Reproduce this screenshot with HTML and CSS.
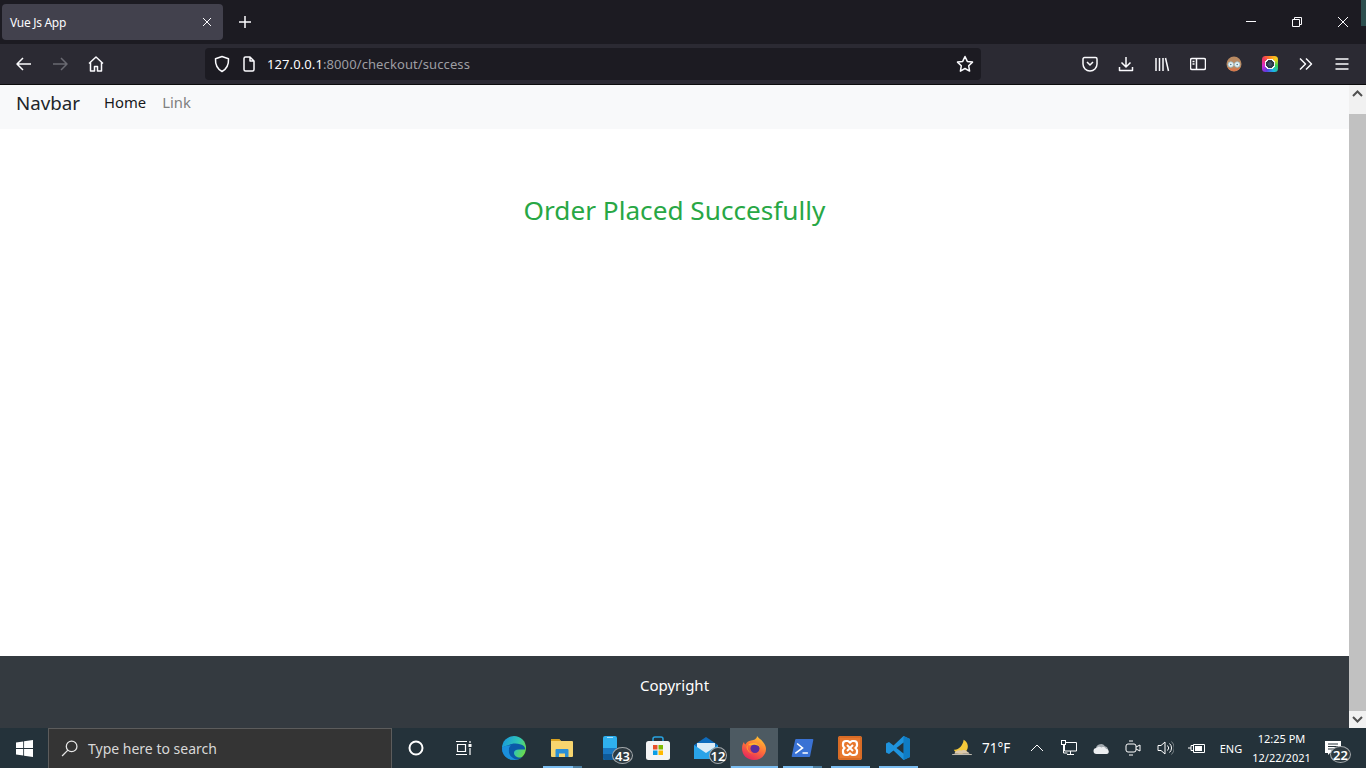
FILE: index.html
```html
<!DOCTYPE html>
<html lang="en">
  <head>
    <meta charset="UTF-8" />
    <meta name="viewport" content="width=device-width, initial-scale=1.0" />
    <title>Vue Js App</title>
    <link rel="stylesheet" href="styles.css">
  </head>
  <body>
    <div class="tabstrip">
      <div class="tab">
        <span class="tab-title">Vue Js App</span>
        <svg class="tab-close" width="10" height="10" viewBox="0 0 10 10"><path d="M1 1l8 8M9 1l-8 8"/></svg>
      </div>
      <svg class="new-tab" width="14" height="14" viewBox="0 0 14 14"><path d="M7 1v12M1 7h12"/></svg>
      <div class="window-controls">
        <svg width="46" height="12" viewBox="0 0 46 12"><path d="M18 5.5h10"/></svg>
        <svg width="46" height="12" viewBox="0 0 46 12"><path d="M18.5 3.5h7v7h-7zM20.5 3.5v-2h7v7h-2"/></svg>
        <svg width="46" height="12" viewBox="0 0 46 12"><path d="M18 1l10 10M28 1l-10 10"/></svg>
      </div>
      <div class="strip-edge"></div>
    </div>

    <div class="toolbar">
      <svg class="tool-icon" width="18" height="18" viewBox="0 0 18 18"><path d="M16 9H2M8 3L2 9l6 6"/></svg>
      <svg class="tool-icon dim" width="18" height="18" viewBox="0 0 18 18"><path d="M2 9h14M10 3l6 6-6 6"/></svg>
      <svg class="tool-icon" width="18" height="18" viewBox="0 0 18 18"><path d="M2 8.5L9 2l7 6.5M3.5 7.5V16h4v-4.5h3V16h4V7.5"/></svg>
      <div class="urlbar">
        <svg class="tool-icon" width="18" height="18" viewBox="0 0 18 18"><path d="M9 1.5l6.5 2.2c.3 5.5-1.5 10-6.5 12.800C4 13.700 2.200 9.200 2.500 3.700z"/></svg>
        <svg class="tool-icon" width="16" height="16" viewBox="0 0 16 16"><path d="M3 2.500A1.500 1.500 0 0 1 4.500 1H9l4 4v8.500a1.500 1.500 0 0 1-1.500 1.500h-7A1.500 1.500 0 0 1 3 13.500zM9 1v4h4"/></svg>
        <span class="url"><span class="url-host">127.0.0.1</span>:8000/checkout/success</span>
        <svg class="tool-icon star" width="18" height="18" viewBox="0 0 18 18"><path d="M9 1.500l2.300 4.900 5.200.7-3.800 3.700.9 5.300L9 13.500l-4.600 2.600.9-5.300L1.500 7.100l5.200-.7z"/></svg>
      </div>
      <div class="toolbar-right">
        <svg class="tool-icon" width="16" height="16" viewBox="0 0 16 16"><path d="M2.500 1.500h11A1.500 1.500 0 0 1 15 3v5a7 7 0 0 1-14 0V3a1.500 1.500 0 0 1 1.500-1.500zM5 6l3 3 3-3"/></svg>
        <svg class="tool-icon" width="16" height="16" viewBox="0 0 16 16"><path d="M8 1v10M3.500 6.500L8 11l4.500-4.500M1.500 11v3.500h13V11"/></svg>
        <svg class="tool-icon" width="16" height="16" viewBox="0 0 16 16"><path d="M2 2v13M5.500 2v13M9 2v13M11.500 2l3 13"/></svg>
        <svg class="tool-icon" width="16" height="16" viewBox="0 0 16 16"><rect x="0.500" y="2.500" width="15" height="11" rx="1.500"/><path d="M6.500 2.500v11M2.500 5.500h2M2.500 8h2"/></svg>
        <svg width="16" height="16" viewBox="0 0 16 16">
          <circle cx="8" cy="8" r="7.500" fill="#b98a62"/>
          <path d="M1.500 11c2 5.500 11 5.500 13 0-1 1-3 1.500-6.500 1.500S2.500 12 1.500 11z" fill="#d9764a"/>
          <circle cx="4.800" cy="8.500" r="2.700" fill="#eaf4f6" stroke="#9cc2cf" stroke-width="0.800"/>
          <circle cx="11.200" cy="8.500" r="2.700" fill="#eaf4f6" stroke="#9cc2cf" stroke-width="0.800"/>
          <circle cx="4.800" cy="8.500" r="0.800" fill="#4a7a8c"/>
          <circle cx="11.200" cy="8.500" r="0.800" fill="#4a7a8c"/>
        </svg>
        <div class="color-icon"></div>
        <svg class="tool-icon" width="16" height="16" viewBox="0 0 16 16"><path d="M2 2.500L7.500 8 2 13.500M8 2.500L13.500 8 8 13.500"/></svg>
        <svg class="tool-icon" width="16" height="16" viewBox="0 0 16 16"><path d="M1.500 3h13M1.500 8h13M1.500 13h13"/></svg>
      </div>
    </div>

    <div class="viewport">
      <div class="page">
        <nav class="navbar">
          <a class="navbar-brand">Navbar</a>
          <a class="nav-link active">Home</a>
          <a class="nav-link">Link</a>
        </nav>
        <main class="content">
          <h2 class="success">Order Placed Succesfully</h2>
        </main>
        <footer class="footer">Copyright</footer>
      </div>
      <div class="scrollbar">
        <div class="scroll-btn">
          <svg width="11" height="7" viewBox="0 0 11 7"><path d="M1 6l4.500-4.500L10 6"/></svg>
        </div>
        <div class="scroll-thumb"></div>
        <div class="scroll-btn">
          <svg width="11" height="7" viewBox="0 0 11 7"><path d="M1 1l4.500 4.500L10 1"/></svg>
        </div>
      </div>
    </div>

    <div class="taskbar">
      <div class="start">
        <svg width="17" height="17" viewBox="0 0 16 16"><path d="M0 2.300l6.800-1v6.300H0zM7.600 1.200L16 0v7.600H7.600zM0 8.400h6.800v6.300l-6.800-1zM7.600 8.400H16V16l-8.400-1.200z" fill="#fff"/></svg>
      </div>
      <div class="search">
        <svg class="search-icon" width="17" height="17" viewBox="0 0 16 16"><circle cx="10" cy="6" r="5"/><path d="M6.500 9.500L1 15"/></svg>
        <span>Type here to search</span>
      </div>
      <div class="task-btn">
        <svg width="16" height="16" viewBox="0 0 16 16"><circle cx="8" cy="8" r="6.500" fill="none" stroke="#fff" stroke-width="2"/></svg>
      </div>
      <div class="task-btn">
        <svg width="18" height="16" viewBox="0 0 18 16" fill="none" stroke="#fff"><path d="M1 1.500h11M1 14.500h11M2.500 4.500h8v7h-8zM15 1v2M15 8v7" stroke-width="1.200"/><rect x="13.500" y="4" width="3" height="3" fill="#fff" stroke="none"/></svg>
      </div>
      <div class="task-btn pinned-first">
        <svg width="24" height="24" viewBox="0 0 24 24">
          <defs>
            <linearGradient id="edgeGreen" x1="0.100" y1="0.200" x2="1" y2="0.600">
              <stop offset="0" stop-color="#1b9ed8"/>
              <stop offset="0.550" stop-color="#30c6b4"/>
              <stop offset="1" stop-color="#6cdb4a"/>
            </linearGradient>
          </defs>
          <circle cx="12" cy="12" r="12" fill="url(#edgeGreen)"/>
          <path d="M0 12c0 7 5.500 12 12.500 12 3 0 6-1 8-3-4 1.500-8.500-.5-8.500-4 0-2 1.500-3.500 5-3.500h6c.5-2-1-4-4-5-5-1.500-9-1-12 .5C3.500 10 1 11 0 12z" fill="#0b5aa8"/>
          <path d="M0 12c0 7 5.500 12 12.500 12 1 0 2-.1 3-.4-5-.6-9.500-4.600-8.500-10.100-.3-1.500.5-3 2-4C6 9.500 2 10 0 12z" fill="#1b8fdc"/>
        </svg>
      </div>
      <div class="task-btn running stacked">
        <svg width="22" height="20" viewBox="0 0 22 20">
          <path d="M0 2a1 1 0 0 1 1-1h7l2 2h11a1 1 0 0 1 1 1v14a1 1 0 0 1-1 1H1a1 1 0 0 1-1-1z" fill="#f7d56e"/>
          <path d="M0 1.500a.5.500 0 0 1 .5-.5H8l2 2H0z" fill="#d9a21f"/>
          <path d="M4.500 19v-7a1 1 0 0 1 1-1h11a1 1 0 0 1 1 1v7h-3.500v-3.500H8V19z" fill="#2a8fd6"/>
        </svg>
      </div>
      <div class="task-btn">
        <svg width="14" height="24" viewBox="0 0 14 24">
          <path d="M2 0h10a2 2 0 0 1 2 2v22H2a2 2 0 0 1-2-2V2a2 2 0 0 1 2-2z" fill="#2fb0ee"/>
          <path d="M0 12h14v6H0z" fill="#1a78c2"/>
          <path d="M0 18h14v6H2a2 2 0 0 1-2-2z" fill="#0f5a99"/>
          <path d="M4 1.500h6" stroke="#a9defa"/>
        </svg>
        <span class="badge badge-phone">43</span>
      </div>
      <div class="task-btn">
        <svg width="24" height="24" viewBox="0 0 24 24">
          <path d="M7 6V3a2 2 0 0 1 2-2h6a2 2 0 0 1 2 2v3" fill="none" stroke="#29a3e0" stroke-width="1.500"/>
          <rect y="5" width="24" height="19" rx="2.500" fill="#f4f4f4"/>
          <rect x="7" y="9" width="4.500" height="4.500" fill="#e8502a"/>
          <rect x="12.500" y="9" width="4.500" height="4.500" fill="#7fba00"/>
          <rect x="7" y="14.500" width="4.500" height="4.500" fill="#0a9ee6"/>
          <rect x="12.500" y="14.500" width="4.500" height="4.500" fill="#ffb900"/>
        </svg>
      </div>
      <div class="task-btn">
        <svg width="24" height="22" viewBox="0 0 24 22">
          <path d="M0 8L12 0l12 8v14H0z" fill="#0f6cbd"/>
          <path d="M3 6h18v8l-9 4-9-4z" fill="#dcecf7"/>
          <path d="M0 8l12 8 12-8v14H0z" fill="#29a3e8"/>
        </svg>
        <span class="badge badge-mail">12</span>
      </div>
      <div class="task-btn active">
        <svg width="24" height="24" viewBox="0 0 24 24">
          <defs>
            <linearGradient id="foxGrad" x1="0.800" y1="0" x2="0.300" y2="1">
              <stop offset="0" stop-color="#ffcb30"/>
              <stop offset="0.500" stop-color="#ff7139"/>
              <stop offset="1" stop-color="#e3235e"/>
            </linearGradient>
          </defs>
          <path d="M15 0c1 2 4 3 6 6 2 2.500 3 4.500 3 7 0 6-5 11-12 11S0 19 0 12.500C0 9.500 1 7 2 6c0 1 .5 2 1.500 2.500C4.500 6 6.500 5 9 4.500 12 4 15 3 15 0z" fill="url(#foxGrad)"/>
          <circle cx="13" cy="12.500" r="4.500" fill="#5b2e9e"/>
          <path d="M6 9c2-2 7-3 10-.5 1 .8 2 1.500 2 3-1.500-2-4.500-3-7-2.500-2 .3-3.500.5-5 0z" fill="#ffb52e"/>
          <path d="M6 9c-1 3 0 7 5 8.500-3 0-6-3-6.500-6C4.500 10.500 5 9.500 6 9z" fill="#ff9a2e"/>
        </svg>
      </div>
      <div class="task-btn running stacked">
        <svg width="23" height="18" viewBox="0 0 24 20">
          <path d="M5 0h18a1 1 0 0 1 1 1.200L20.500 19a1.200 1.200 0 0 1-1.200 1H1a1 1 0 0 1-1-1.200L3.800 1A1.200 1.200 0 0 1 5 0z" fill="#3a72d4"/>
          <path d="M6 5l6 5-8 6M12 15.500h6" fill="none" stroke="#fff" stroke-width="1.800"/>
        </svg>
      </div>
      <div class="task-btn running">
        <svg width="24" height="24" viewBox="0 0 24 24">
          <rect width="24" height="24" rx="2" fill="#e8782e"/>
          <rect x="1" y="1" width="22" height="22" rx="1.500" fill="none" stroke="#c9601e"/>
          <path d="M5 8a3 3 0 0 1 3-3h1.500a2 2 0 0 1 1.500.7l1 .8 1-.8a2 2 0 0 1 1.500-.7H16a3 3 0 0 1 3 3v1.500a2 2 0 0 1-.7 1.500l-.8 1 .8 1a2 2 0 0 1 .7 1.500V16a3 3 0 0 1-3 3h-1.500a2 2 0 0 1-1.500-.7l-1-.8-1 .8a2 2 0 0 1-1.500.7H8a3 3 0 0 1-3-3v-1.500a2 2 0 0 1 .7-1.500l.8-1-.8-1A2 2 0 0 1 5 9.500z" fill="none" stroke="#fff" stroke-width="2.200"/>
          <path d="M9 9l6 6M15 9l-6 6" stroke="#fff" stroke-width="2"/>
        </svg>
      </div>
      <div class="task-btn running">
        <svg width="24" height="24" viewBox="0 0 24 24">
          <path d="M17.500 0L24 3v18l-6.500 3-10-9.500L3 18l-3-1.500v-9L3 6l4.500 3.500z" fill="#1f93dd"/>
          <path d="M17.500 0L24 3v18l-6.500 3z" fill="#0f7cc4"/>
          <path d="M17.500 6.500v11L10.500 12z" fill="#24323a"/>
        </svg>
      </div>

      <div class="tray">
        <svg width="22" height="18" viewBox="0 0 26 22">
          <path d="M15 1a9 9 0 1 1-12 12c5 1 11-4 12-12z" fill="#f5c93a"/>
          <path d="M4 17c1-3 5-4 8-3 2-1 6-1 8 2 1 .5 2 1 2 2H4z" fill="#dcc9ae"/>
          <path d="M1 19h24" stroke="#e9dfd0"/>
        </svg>
        <span class="temp">71°F</span>
        <div class="tray-cell">
          <svg class="tray-icon" width="14" height="8" viewBox="0 0 14 8"><path d="M1 7l6-6 6 6"/></svg>
        </div>
        <div class="tray-cell">
          <svg class="tray-icon" width="16" height="16" viewBox="0 0 16 16"><path d="M3.500 2.500h12v8.500h-12zM9.500 11v3M6 14.500h7M2.500 4.500v8.500h4"/><rect x="0.500" y="0.500" width="4" height="4" fill="#24323a"/></svg>
        </div>
        <div class="tray-cell">
          <svg width="17" height="11" viewBox="0 0 17 11"><path d="M3 7a5 5 0 0 1 9-3.800A4 4 0 0 1 15 7z" fill="#a4abb0"/><path d="M3.500 11a3 3 0 0 1 0-6c1-1 3-2 5-.5 2-1 3.500-.5 4.500 1.500a2.500 2.500 0 0 1 .5 5z" fill="#eceef0"/></svg>
        </div>
        <div class="tray-cell">
          <svg class="tray-icon" width="16" height="16" viewBox="0 0 16 16"><rect x="1" y="4" width="10" height="8" rx="2"/><path d="M11 7l4-2v6l-4-2M4 1h4M4 15h4"/></svg>
        </div>
        <div class="tray-cell">
          <svg class="tray-icon" width="17" height="16" viewBox="0 0 17 16"><path d="M1 5.500h3L8 2v12l-4-3.500H1zM10.500 5.500a3.500 3.500 0 0 1 0 5M12.500 3.500a6 6 0 0 1 0 9"/><path class="tray-faint" d="M14.500 1.500a9 9 0 0 1 0 13"/></svg>
        </div>
        <div class="tray-cell">
          <svg class="tray-icon" width="18" height="12" viewBox="0 0 18 12"><path d="M5.500 2.500h11v8h-11zM0 6h3M3 3.500h2.500v5H3z"/><path d="M7 4h7v5H7z" fill="#fff" stroke="none"/></svg>
        </div>
        <span class="lang">ENG</span>
        <div class="clock">
          <span>12:25 PM</span>
          <span>12/22/2021</span>
        </div>
        <div class="notify">
          <svg width="16" height="14" viewBox="0 0 16 14"><path d="M0 0h16v12H5l-2 2v-2H0z" fill="#fff"/><path d="M3 3h10M3 5.500h10M3 8h7" stroke="#24323a"/></svg>
          <span class="badge badge-notify">22</span>
        </div>
      </div>
    </div>
  </body>
</html>
```

FILE: styles.css
```css
* {
  box-sizing: border-box;
}
html,
body {
  height: 100%;
}
body {
  margin: 0;
  display: flex;
  flex-direction: column;
  overflow: hidden;
  font-family: "Noto Sans", "Open Sans", sans-serif;
  background: #fff;
}
svg {
  display: block;
  flex: none;
}

/* browser chrome */
.tabstrip {
  position: relative;
  height: 44px;
  flex: none;
  display: flex;
  align-items: center;
  background: #1c1b22;
  color: #fbfbfe;
}
.tab {
  width: 221px;
  height: 36px;
  margin: 0 15px 0 2px;
  padding: 0 11px 0 8px;
  display: flex;
  align-items: center;
  justify-content: space-between;
  background: #42414d;
  border-radius: 4px;
}
.tab-title {
  font-size: 12px;
  letter-spacing: -0.3px;
}
.tab-close path,
.new-tab path,
.window-controls path {
  fill: none;
  stroke: #fbfbfe;
  stroke-width: 1;
}
.new-tab path {
  stroke-width: 1.5;
}
.window-controls {
  margin-left: auto;
  display: flex;
}
.strip-edge {
  position: absolute;
  top: 0;
  right: 0;
  width: 5px;
  height: 26px;
  background: #2d4f4f;
}
.toolbar {
  height: 41px;
  flex: none;
  display: flex;
  align-items: center;
  gap: 18px;
  padding: 0 15px 1px;
  background: #2b2a33;
  border-bottom: 1px solid #0c0c0d;
}
.tool-icon {
  fill: none;
  stroke: #fbfbfe;
  stroke-width: 1.5;
  stroke-linejoin: round;
}
.tool-icon.dim {
  stroke: #6a6a72;
}
.urlbar {
  width: 776px;
  height: 32px;
  margin-left: 82px;
  padding: 0 7px 0 8px;
  display: flex;
  align-items: center;
  gap: 10px;
  background: #1c1b22;
  border-radius: 4px;
}
.url {
  font-size: 13px;
  letter-spacing: 0.1px;
  color: #9e9ea3;
}
.url-host {
  color: #fbfbfe;
}
.star {
  margin-left: auto;
}
.toolbar-right {
  margin-left: auto;
  display: flex;
  align-items: center;
  gap: 20px;
  padding-right: 1px;
}
.color-icon {
  width: 16px;
  height: 16px;
  border-radius: 3.5px;
  background:
    radial-gradient(circle, #3d5266 0 2px, #2c3a47 2px 4px, #f2f4f5 4px 5.5px, transparent 5.5px),
    conic-gradient(#ff8a1f, #f5d21f, #39d353, #18b5e8, #5b3ce0, #d92bd0, #f03a5f, #ff8a1f);
}

/* page */
.viewport {
  flex: 1;
  min-height: 0;
  display: flex;
}
.page {
  flex: 1;
  display: flex;
  flex-direction: column;
}
.navbar {
  height: 44px;
  flex: none;
  display: flex;
  align-items: center;
  padding: 0 0 10px 16px;
  background: #f8f9fa;
}
.navbar-brand {
  margin-right: 16px;
  font-size: 18.75px;
  color: #212529;
}
.nav-link {
  padding: 0 8px;
  font-size: 14.8px;
  color: #80807f;
}
.nav-link.active {
  color: #16181b;
}
.content {
  flex: 1;
  padding-top: 63px;
  text-align: center;
}
.success {
  margin: 0;
  font-size: 26.2px;
  font-weight: 400;
  line-height: 36px;
  color: #28a745;
}
.footer {
  height: 72px;
  flex: none;
  display: flex;
  align-items: center;
  justify-content: center;
  padding-bottom: 14px;
  font-size: 15px;
  color: #fff;
  background: #343a40;
}
.scrollbar {
  width: 17px;
  flex: none;
  display: flex;
  flex-direction: column;
  background: #f1f1f1;
}
.scroll-btn {
  height: 17px;
  flex: none;
  display: flex;
  align-items: center;
  justify-content: center;
}
.scroll-btn path {
  fill: none;
  stroke: #505050;
  stroke-width: 2;
}
.scroll-thumb {
  flex: 1;
  margin-top: 12px;
  background: #c1c1c1;
}

/* windows taskbar */
.taskbar {
  height: 40px;
  flex: none;
  display: flex;
  align-items: stretch;
  background: #24323a;
  color: #fff;
}
.start {
  width: 48px;
  flex: none;
  display: flex;
  align-items: center;
  justify-content: center;
}
.search {
  width: 344px;
  flex: none;
  display: flex;
  align-items: center;
  gap: 10px;
  padding-left: 12px;
  font-size: 14px;
  color: #d8d8d8;
  background: #343434;
  border: 1px solid #5c5c5c;
  border-bottom: 0;
}
.search-icon {
  fill: none;
  stroke: #e6e6e6;
  stroke-width: 1.2;
}
.task-btn {
  width: 48px;
  flex: none;
  position: relative;
  display: flex;
  align-items: center;
  justify-content: center;
}
.pinned-first {
  margin-left: 2px;
}
.task-btn.active {
  background: #4d5a62;
}
.task-btn.running::after,
.task-btn.active::after {
  content: "";
  position: absolute;
  left: 5px;
  right: 4px;
  bottom: 0;
  height: 2px;
  background: #7abcf0;
}
.task-btn.stacked::after {
  background: linear-gradient(90deg, #7abcf0 0 30px, #4b7d9f 30px);
}
.task-btn.active::after {
  left: 1px;
  right: 0;
}
.badge {
  position: absolute;
  height: 17px;
  display: flex;
  align-items: center;
  justify-content: center;
  font-size: 13px;
  font-weight: 600;
  color: #fff;
  background: #2e3a41;
  border: 1px solid #a4a9ac;
  border-radius: 50%;
}
.badge-phone {
  width: 21px;
  right: 1px;
  bottom: 4px;
}
.badge-mail {
  width: 18px;
  right: 3px;
  bottom: 4px;
}
.tray {
  flex: 1;
  min-width: 0;
  display: flex;
  align-items: center;
  padding-left: 29px;
}
.temp {
  width: 48px;
  padding-left: 9px;
  font-size: 13.5px;
}
.tray-cell {
  width: 32px;
  display: flex;
  justify-content: center;
}
.tray-icon {
  fill: none;
  stroke: #fff;
  stroke-width: 1;
}
.tray-faint {
  opacity: 0.4;
}
.lang {
  width: 36px;
  text-align: center;
  font-size: 11px;
}
.clock {
  width: 65px;
  display: flex;
  flex-direction: column;
  align-items: center;
  font-size: 11px;
  line-height: 19px;
}
.notify {
  position: relative;
  width: 38px;
  height: 100%;
  display: flex;
  align-items: center;
  justify-content: center;
}
.badge-notify {
  width: 21px;
  right: 1px;
  bottom: 5px;
}
```
